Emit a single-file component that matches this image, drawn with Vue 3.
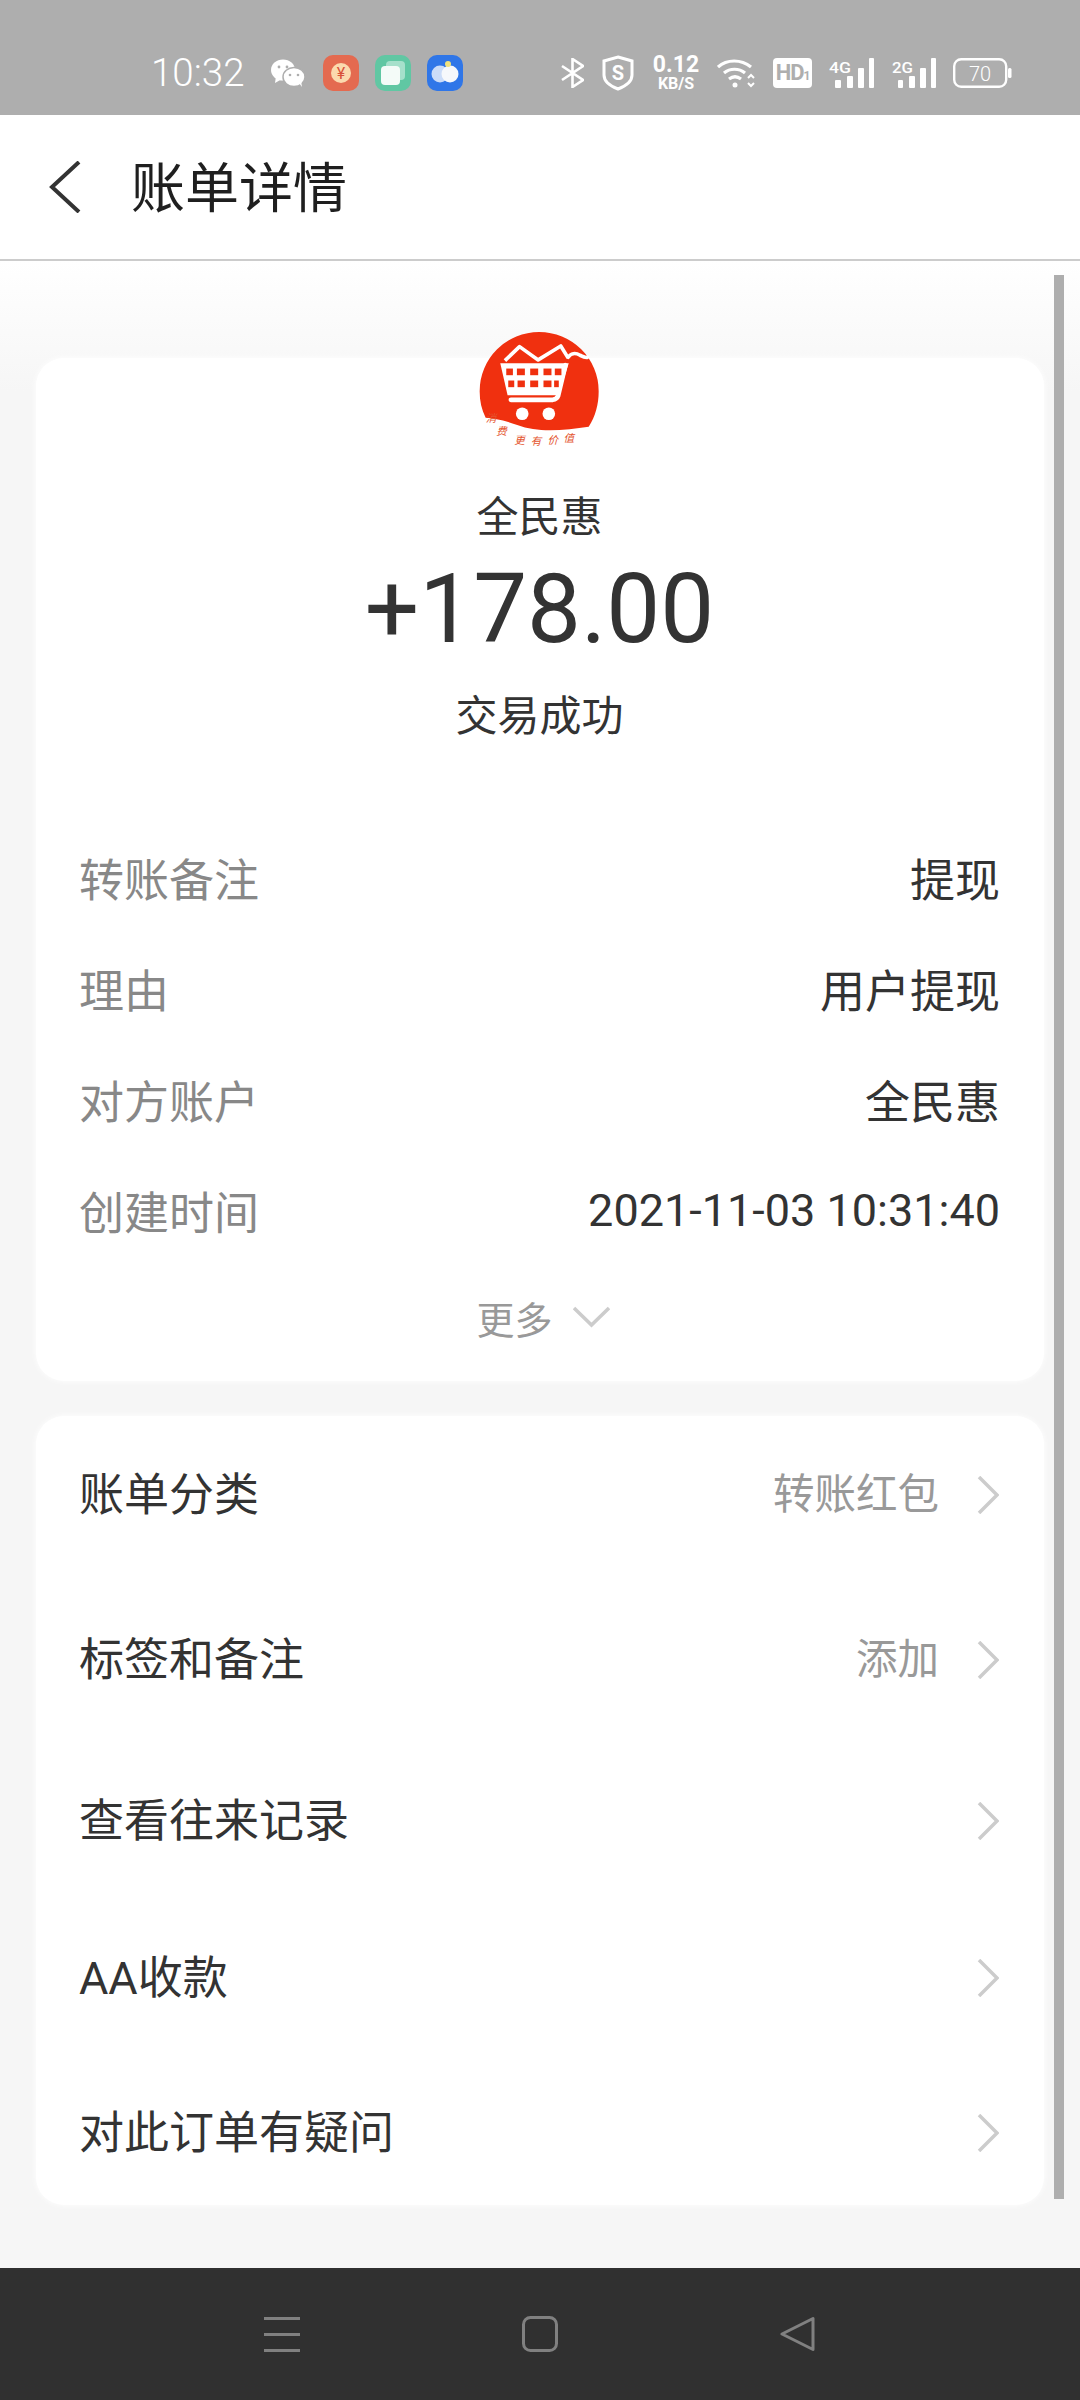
<script setup>
const details = [
  { label: "转账备注", value: "提现" },
  { label: "理由", value: "用户提现" },
  { label: "对方账户", value: "全民惠" },
  { label: "创建时间", value: "2021-11-03 10:31:40" },
];

const links = [
  { label: "账单分类", value: "转账红包" },
  { label: "标签和备注", value: "添加" },
  { label: "查看往来记录", value: "" },
  { label: "AA收款", value: "" },
  { label: "对此订单有疑问", value: "" },
];
</script>

<template>
  <div class="phone">
    <div class="status">
      <span class="time">10:32</span>
      <svg class="wechat" width="34" height="28" viewBox="0 0 34 28">
        <ellipse cx="12" cy="11" rx="12" ry="10.5" fill="#fff" />
        <path d="M5 17l-1 7 7-4z" fill="#fff" />
        <ellipse cx="23" cy="18" rx="11" ry="9.5" fill="#fff" stroke="#aeaeae" stroke-width="1.5" />
        <path d="M28 24l3 4-1-6z" fill="#fff" />
        <circle cx="8" cy="8" r="1.4" fill="#aeaeae" />
        <circle cx="16" cy="8" r="1.4" fill="#aeaeae" />
        <circle cx="19" cy="16" r="1.3" fill="#aeaeae" />
        <circle cx="27" cy="16" r="1.3" fill="#aeaeae" />
      </svg>
      <div class="apps">
        <svg width="36" height="36" viewBox="0 0 36 36">
          <rect width="36" height="36" rx="10" fill="#e46a50" />
          <circle cx="18" cy="18" r="10" fill="#fbd9ae" />
          <text x="18" y="24" text-anchor="middle" font-size="16" fill="#d8503a" font-family="Roboto, sans-serif">¥</text>
        </svg>
        <svg width="36" height="36" viewBox="0 0 36 36">
          <rect width="36" height="36" rx="10" fill="#60c7a3" />
          <rect x="11" y="6" width="19" height="19" rx="4" fill="#a6e0cb" />
          <rect x="6" y="11" width="19" height="19" rx="4" fill="#f4fbf8" />
        </svg>
        <svg width="36" height="36" viewBox="0 0 36 36">
          <rect width="36" height="36" rx="10" fill="#2f76e8" />
          <circle cx="13" cy="19" r="8.5" fill="#cbdcf8" />
          <circle cx="23" cy="19" r="8.5" fill="#f6f8fb" />
          <circle cx="21" cy="9" r="3" fill="#f0e27e" />
        </svg>
      </div>
      <div class="indicators">
        <svg width="23" height="30" viewBox="0 0 23 30" fill="none" stroke="#fff" stroke-width="2.6">
          <path d="M1 8l21 14-10.500 7V1L22 8 1 22" />
        </svg>
        <svg width="34" height="36" viewBox="0 0 34 36">
          <path d="M17 2l14 4v14c0 7-6 11-14 14C9 31 3 27 3 20V6z" fill="none" stroke="#fff" stroke-width="3" />
          <text x="17" y="25" text-anchor="middle" font-size="20" font-weight="700" fill="#fff" font-family="Roboto, sans-serif">S</text>
        </svg>
        <div class="speed">
          <span class="speed-num">0.12</span>
          <span class="speed-unit">KB/S</span>
        </div>
        <svg width="39" height="30" viewBox="0 0 39 30" fill="none" stroke="#fff" stroke-width="3.200">
          <path d="M1 9C10 1 24 1 34 9" />
          <path d="M7 15c6-5 15-5 21 0" />
          <path d="M12 21c4-3 8-3 12 0" />
          <circle cx="18" cy="27" r="2.500" fill="#fff" stroke="none" />
          <path d="M31 20l3-3 3 3M31 25l3 3 3-3" stroke-width="2" />
        </svg>
        <div class="hd">HD<small>1</small></div>
        <svg width="46" height="30" viewBox="0 0 46 30">
          <text x="0" y="15" font-size="15" font-weight="500" fill="#fff" font-family="Roboto, sans-serif" textLength="22" lengthAdjust="spacingAndGlyphs">4G</text>
          <rect x="6" y="22" width="6" height="8" rx="1" fill="#fff" />
          <rect x="18" y="18" width="6" height="12" rx="1" fill="#fff" />
          <rect x="29" y="10" width="6" height="20" rx="1" fill="#fff" />
          <rect x="40" y="0" width="5" height="30" rx="1" fill="#fff" />
        </svg>
        <svg width="44" height="30" viewBox="0 0 44 30">
          <text x="0" y="15" font-size="15" font-weight="500" fill="#fff" font-family="Roboto, sans-serif" textLength="21" lengthAdjust="spacingAndGlyphs">2G</text>
          <rect x="6" y="22" width="5" height="8" rx="1" fill="#fff" />
          <rect x="17" y="18" width="6" height="12" rx="1" fill="#fff" />
          <rect x="28" y="10" width="6" height="20" rx="1" fill="#fff" />
          <rect x="39" y="0" width="5" height="30" rx="1" fill="#fff" />
        </svg>
        <svg width="59" height="30" viewBox="0 0 59 30">
          <rect x="1.200" y="1.200" width="52" height="27.600" rx="7" fill="none" stroke="#fff" stroke-width="2.400" />
          <rect x="55" y="10" width="3.500" height="10" rx="1.500" fill="#fff" />
          <text x="27" y="23" text-anchor="middle" font-size="20" font-weight="300" fill="#fff" font-family="Roboto, sans-serif">70</text>
        </svg>
      </div>
    </div>

    <div class="header">
      <svg class="back" width="32" height="52" viewBox="0 0 32 52" fill="none" stroke="#333" stroke-width="4">
        <path d="M30 1L3 26l27 25" />
      </svg>
      <h1>账单详情</h1>
    </div>

    <div class="content">
      <div class="scrollbar"></div>

      <div class="card summary">
        <svg class="logo" width="127" height="123" viewBox="470 170 380 370">
          <path d="M480 360a179 178 0 1 1 358 0c0 40-10 75-30 107-70 10-150 20-215 -5-40-15-70-20-95-22-12-25-18-50-18-80z" fill="#f0300f" />
          <path d="M556 268l44-42 56 40 68-42 22 36" fill="#f0300f" stroke="#fff" stroke-width="11" stroke-linejoin="round" />
          <path d="M746 258c8-12 22-14 36-6 10 5 18 8 22 6" fill="none" stroke="#fff" stroke-width="11" stroke-linecap="round" />
          <path d="M542 276h206l-30 96H564z" fill="#fff" />
          <path d="M738 282l-22 92q-4 10-16 12H574" fill="none" stroke="#fff" stroke-width="14" stroke-linecap="round" />
          <g fill="#f0300f">
            <rect x="560" y="292" width="20" height="20" />
            <rect x="592" y="292" width="24" height="20" />
            <rect x="632" y="292" width="24" height="20" />
            <rect x="672" y="292" width="24" height="20" />
            <rect x="706" y="292" width="20" height="20" />
            <rect x="566" y="328" width="18" height="20" />
            <rect x="594" y="328" width="22" height="20" />
            <rect x="632" y="328" width="24" height="20" />
            <rect x="672" y="328" width="24" height="20" />
            <rect x="704" y="328" width="14" height="20" />
          </g>
          <circle cx="608" cy="428" r="19" fill="#fff" />
          <circle cx="688" cy="428" r="19" fill="#fff" />
          <g class="logo-text" font-size="32" font-style="italic" fill="#e4552f">
            <text x="498" y="452">消</text>
            <text x="530" y="492">费</text>
            <text x="584" y="520">更</text>
            <text x="634" y="522">有</text>
            <text x="684" y="520">价</text>
            <text x="732" y="514">值</text>
          </g>
        </svg>
        <div class="name">全民惠</div>
        <div class="amount">+178.00</div>
        <div class="state">交易成功</div>

        <div class="details">
          <div v-for="item in details" :key="item.label" class="detail">
            <span class="detail-label">{{ item.label }}</span>
            <span class="detail-value">{{ item.value }}</span>
          </div>
        </div>

        <div class="more">
          <span>更多</span>
          <svg width="37" height="22" viewBox="0 0 37 22" fill="none" stroke="#ccc" stroke-width="3.500">
            <path d="M1 2l17.500 17L36 2" />
          </svg>
        </div>
      </div>

      <div class="card links">
        <div v-for="item in links" :key="item.label" class="link">
          <span class="link-label">{{ item.label }}</span>
          <span class="link-value">{{ item.value }}</span>
          <svg width="22" height="38" viewBox="0 0 22 38" fill="none" stroke="#ccc" stroke-width="3.500">
            <path d="M2 1l18 18L2 37" />
          </svg>
        </div>
      </div>
    </div>

    <div class="nav">
      <svg width="36" height="36" viewBox="0 0 36 36" fill="#808080">
        <rect y="1" width="36" height="3" />
        <rect y="17" width="36" height="3" />
        <rect y="33" width="36" height="3" />
      </svg>
      <svg width="36" height="36" viewBox="0 0 36 36">
        <rect x="1.500" y="1.500" width="33" height="33" rx="7" fill="none" stroke="#808080" stroke-width="3" />
      </svg>
      <svg width="36" height="36" viewBox="0 0 36 36">
        <path d="M33 2.500v31L2 18z" fill="none" stroke="#808080" stroke-width="3" stroke-linejoin="round" />
      </svg>
    </div>
  </div>
</template>

<style>
html,
body {
  margin: 0;
  background: #f5f5f5;
}
</style>

<style scoped>
.phone {
  width: 1080px;
  height: 2400px;
  display: flex;
  flex-direction: column;
  font-family: Roboto, "Noto Sans CJK SC", sans-serif;
  color: #333;
  overflow: hidden;
}

.status {
  height: 115px;
  flex-shrink: 0;
  box-sizing: border-box;
  padding: 30px 68px 0 151px;
  display: flex;
  align-items: center;
  background: #aeaeae;
  color: #fff;
}

.time {
  font-size: 38.5px;
  font-weight: 300;
  width: 94px;
}

.wechat {
  margin-left: 26px;
}

.apps {
  display: flex;
  gap: 16px;
  margin-left: 18px;
}

.indicators {
  margin-left: auto;
  display: flex;
  align-items: center;
  gap: 17px;
}

.speed {
  width: 48px;
  display: flex;
  flex-direction: column;
  align-items: center;
  font-weight: 700;
  line-height: 1;
}

.speed-num {
  font-size: 23px;
}

.speed-unit {
  font-size: 16px;
}

.hd {
  width: 39px;
  height: 30px;
  border-radius: 4px;
  background: #fff;
  color: #aeaeae;
  font-size: 22px;
  font-weight: 700;
  line-height: 30px;
  text-align: center;
  letter-spacing: -1px;
}

.hd small {
  font-size: 12px;
}

.header {
  height: 144px;
  flex-shrink: 0;
  display: flex;
  align-items: center;
  padding-left: 49px;
  background: #fff;
  border-bottom: 2px solid #ccc;
}

.back {
  margin-right: 50px;
}

h1 {
  margin: 0 0 5px;
  font-size: 54px;
  font-weight: 400;
  color: #1f1f1f;
}

.content {
  position: relative;
  flex: 1;
  padding: 97px 36px 0;
  background: linear-gradient(#fff, #f6f6f6 130px);
}

.scrollbar {
  position: absolute;
  top: 14px;
  left: 1054px;
  width: 10px;
  height: 1924px;
  background: #aeaeae;
}

.card {
  background: #fff;
  border-radius: 28px;
  box-shadow: 0 0 6px #fff;
}

.summary {
  display: flex;
  flex-direction: column;
  align-items: center;
  padding: 0 44px 34px 43px;
}

.logo {
  margin-top: -30px;
  margin-bottom: 37px;
}

.name,
.state {
  font-size: 42px;
  line-height: 60px;
}

.amount {
  font-size: 96px;
  line-height: 100px;
  margin-top: 11px;
}

.state {
  margin-top: 28px;
}

.details {
  align-self: stretch;
  margin-top: 75px;
}

.detail {
  height: 111px;
  display: flex;
  align-items: center;
  justify-content: space-between;
  font-size: 45px;
}

.detail-label {
  color: #888;
}

.more {
  display: flex;
  align-items: center;
  gap: 20px;
  height: 60px;
  margin: 21px 0 0 7px;
  font-size: 38px;
  color: #999;
}

.links {
  margin-top: 35px;
  padding: 45px 45px 46px 43px;
}

.link {
  height: 60px;
  display: flex;
  align-items: center;
  font-size: 45px;
}

.link + .link {
  margin-top: 101px;
}

.link:nth-child(2) {
  margin-top: 105px;
}

.link:nth-child(4) {
  margin-top: 97px;
}

.link:nth-child(5) {
  margin-top: 95px;
}

.link svg {
  margin-top: 8px;
}

.link-label {
  flex: 1;
}

.link-value {
  font-size: 41.5px;
  color: #999;
  margin-right: 38px;
}

.nav {
  height: 132px;
  flex-shrink: 0;
  display: flex;
  align-items: center;
  justify-content: center;
  gap: 222px;
  background: #303030;
}
</style>
